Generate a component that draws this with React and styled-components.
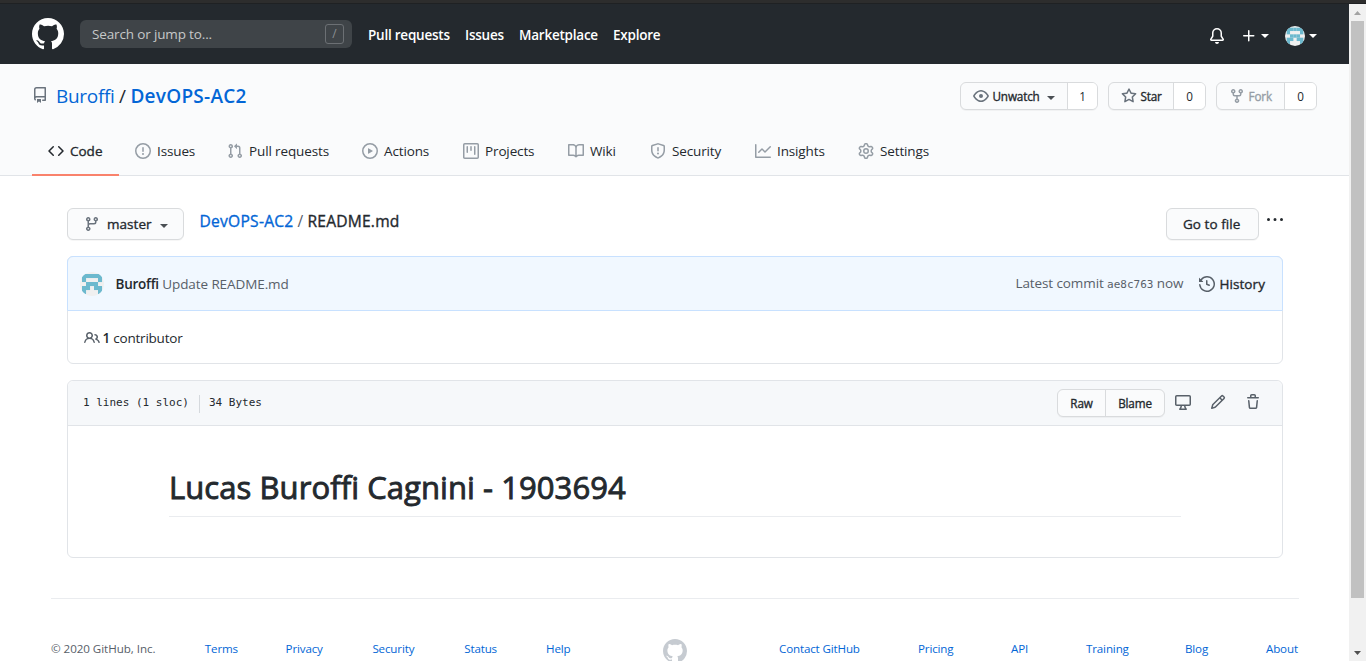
import React from "react";
import styled, { createGlobalStyle, css } from "styled-components";

const GlobalStyle = createGlobalStyle`
  *, *::before, *::after { box-sizing: border-box; }
  body {
    margin: 0;
    background: #fff;
    color: #24292e;
    font-family: "Open Sans", "Noto Sans", sans-serif;
    font-size: 13.5px;
    line-height: 20px;
    letter-spacing: -0.15px;
    overflow: hidden;
  }
  a { color: inherit; text-decoration: none; }
  h1, p { margin: 0; }
  svg { display: block; flex: none; fill: currentColor; }
`;

const paths = {
  github: "M8 0C3.58 0 0 3.58 0 8c0 3.54 2.29 6.53 5.47 7.59.4.07.55-.17.55-.38 0-.19-.01-.82-.01-1.49-2.01.37-2.53-.49-2.69-.94-.09-.23-.48-.94-.82-1.13-.28-.15-.68-.52-.01-.53.63-.01 1.08.58 1.23.82.72 1.21 1.87.87 2.33.66.07-.52.28-.87.51-1.07-1.78-.2-3.64-.89-3.64-3.95 0-.87.31-1.59.82-2.15-.08-.2-.36-1.02.08-2.12 0 0 .67-.21 2.2.82.64-.18 1.32-.27 2-.27.68 0 1.36.09 2 .27 1.53-1.04 2.2-.82 2.2-.82.44 1.1.16 1.92.08 2.12.51.56.82 1.27.82 2.15 0 3.07-1.87 3.75-3.65 3.95.29.25.54.73.54 1.48 0 1.07-.01 1.93-.01 2.2 0 .21.15.46.55.38A8.013 8.013 0 0016 8c0-4.42-3.58-8-8-8z",
  repo: "M2 2.5A2.5 2.5 0 014.5 0h8.75a.75.75 0 01.75.75v12.5a.75.75 0 01-.75.75h-2.5a.75.75 0 110-1.5h1.75v-2h-8a1 1 0 00-.714 1.7.75.75 0 01-1.072 1.05A2.495 2.495 0 012 11.5v-9zm10.5-1V9h-8c-.356 0-.694.074-1 .208V2.5a1 1 0 011-1h8zM5 12.25v3.25a.25.25 0 00.4.2l1.45-1.087a.25.25 0 01.3 0L8.6 15.7a.25.25 0 00.4-.2v-3.25a.25.25 0 00-.25-.25h-3.5a.25.25 0 00-.25.25z",
  code: "M4.72 3.22a.75.75 0 011.06 1.06L2.06 8l3.72 3.72a.75.75 0 11-1.06 1.06L.47 8.53a.75.75 0 010-1.06l4.25-4.25zm6.56 0a.75.75 0 10-1.06 1.06L13.94 8l-3.72 3.72a.75.75 0 101.06 1.06l4.25-4.25a.75.75 0 000-1.06l-4.25-4.25z",
  issue: "M8 1.5a6.5 6.5 0 100 13 6.5 6.5 0 000-13zM0 8a8 8 0 1116 0A8 8 0 010 8zm9 3a1 1 0 11-2 0 1 1 0 012 0zm-.25-6.25a.75.75 0 00-1.5 0v3.5a.75.75 0 001.5 0v-3.5z",
  pull: "M7.177 3.073L9.573.677A.25.25 0 0110 .854v4.792a.25.25 0 01-.427.177L7.177 3.427a.25.25 0 010-.354zM3.75 2.5a.75.75 0 100 1.5.75.75 0 000-1.5zm-2.25.75a2.25 2.25 0 113 2.122v5.256a2.251 2.251 0 11-1.5 0V5.372A2.25 2.25 0 011.5 3.25zM11 2.5h-1V4h1a1 1 0 011 1v5.628a2.251 2.251 0 101.5 0V5A2.5 2.5 0 0011 2.5zm1 10.25a.75.75 0 111.5 0 .75.75 0 01-1.5 0zM3.75 12a.75.75 0 100 1.5.75.75 0 000-1.5z",
  play: "M1.5 8a6.5 6.5 0 1113 0 6.5 6.5 0 01-13 0zM8 0a8 8 0 100 16A8 8 0 008 0zM6.379 5.227A.25.25 0 006 5.442v5.117a.25.25 0 00.379.214l4.264-2.559a.25.25 0 000-.428L6.379 5.227z",
  project: "M1.75 0A1.75 1.75 0 000 1.75v12.5C0 15.216.784 16 1.75 16h12.5A1.75 1.75 0 0016 14.25V1.75A1.75 1.75 0 0014.25 0H1.75zM1.5 1.75a.25.25 0 01.25-.25h12.5a.25.25 0 01.25.25v12.5a.25.25 0 01-.25.25H1.75a.25.25 0 01-.25-.25V1.75zM11.75 3a.75.75 0 00-.75.75v7.5a.75.75 0 001.5 0v-7.5a.75.75 0 00-.75-.75zm-8.25.75a.75.75 0 011.5 0v5.5a.75.75 0 01-1.5 0v-5.5zM8 3a.75.75 0 00-.75.75v3.5a.75.75 0 001.5 0v-3.5A.75.75 0 008 3z",
  book: "M0 1.75A.75.75 0 01.75 1h4.253c1.227 0 2.317.59 3 1.501A3.744 3.744 0 0111.006 1h4.245a.75.75 0 01.75.75v10.5a.75.75 0 01-.75.75h-4.507a2.25 2.25 0 00-1.591.659l-.622.621a.75.75 0 01-1.06 0l-.622-.621A2.25 2.25 0 005.258 13H.75a.75.75 0 01-.75-.75V1.75zm8.755 3a2.25 2.25 0 012.25-2.25H14.5v9h-3.757c-.71 0-1.4.201-1.992.572l.004-7.322zm-1.504 7.324l.004-5.073-.002-2.253A2.25 2.25 0 005.003 2.5H1.5v9h3.757a3.75 3.75 0 011.994.574z",
  shield: "M7.467.133a1.75 1.75 0 011.066 0l5.25 1.68A1.75 1.75 0 0115 3.48V7c0 1.566-.32 3.182-1.303 4.682-.983 1.498-2.585 2.813-5.032 3.855a1.7 1.7 0 01-1.33 0c-2.447-1.042-4.049-2.357-5.032-3.855C1.32 10.182 1 8.566 1 7V3.48a1.75 1.75 0 011.217-1.667l5.25-1.68zm.61 1.429a.25.25 0 00-.153 0l-5.25 1.68a.25.25 0 00-.174.238V7c0 1.358.275 2.666 1.057 3.86.784 1.194 2.121 2.34 4.366 3.297a.2.2 0 00.154 0c2.245-.956 3.582-2.104 4.366-3.298C13.225 9.666 13.5 8.36 13.5 7V3.48a.25.25 0 00-.174-.237l-5.25-1.68zM9 10.5a1 1 0 11-2 0 1 1 0 012 0zm-.25-5.75a.75.75 0 10-1.5 0v3a.75.75 0 001.5 0v-3z",
  graph: "M1.5 1.75a.75.75 0 00-1.5 0v12.5c0 .414.336.75.75.75h14.5a.75.75 0 000-1.5H1.5V1.75zm14.28 2.53a.75.75 0 00-1.06-1.06L10 7.94 7.53 5.47a.75.75 0 00-1.06 0L3.22 8.72a.75.75 0 001.06 1.06L7 7.06l2.47 2.47a.75.75 0 001.06 0l5.25-5.25z",
  gear: "M7.429 1.525a6.593 6.593 0 011.142 0c.036.003.108.036.137.146l.289 1.105c.147.56.55.967.997 1.189.174.086.341.183.501.29.417.278.97.423 1.53.27l1.102-.303c.11-.03.175.016.195.046.219.31.41.641.573.989.014.031.022.11-.059.19l-.815.806c-.411.406-.562.957-.53 1.456a4.588 4.588 0 010 .582c-.032.499.119 1.05.53 1.456l.815.806c.08.08.073.159.059.19a6.494 6.494 0 01-.573.99c-.02.029-.086.074-.195.045l-1.103-.303c-.559-.153-1.112-.008-1.529.27-.16.107-.327.204-.5.29-.449.222-.851.628-.998 1.189l-.289 1.105c-.029.11-.101.143-.137.146a6.613 6.613 0 01-1.142 0c-.036-.003-.108-.037-.137-.146l-.289-1.105c-.147-.56-.55-.967-.997-1.189a4.502 4.502 0 01-.501-.29c-.417-.278-.97-.423-1.53-.27l-1.102.303c-.11.03-.175-.016-.195-.046a6.492 6.492 0 01-.573-.989c-.014-.031-.022-.11.059-.19l.815-.806c.411-.406.562-.957.53-1.456a4.587 4.587 0 010-.582c.032-.499-.119-1.05-.53-1.456l-.815-.806c-.08-.08-.073-.159-.059-.19a6.44 6.44 0 01.573-.99c.02-.029.086-.075.195-.045l1.103.303c.559.153 1.112.008 1.529-.27.16-.107.327-.204.5-.29.449-.222.851-.628.998-1.189l.289-1.105c.029-.11.101-.143.137-.146zM8 0c-.236 0-.47.01-.701.03-.743.065-1.29.615-1.458 1.261l-.29 1.106c-.017.066-.078.158-.211.224a5.994 5.994 0 00-.668.386c-.123.082-.233.09-.3.071L3.27 2.776c-.644-.177-1.392.02-1.82.63a7.977 7.977 0 00-.704 1.217c-.315.675-.111 1.422.363 1.891l.815.806c.05.048.098.147.088.294a6.084 6.084 0 000 .772c.01.147-.038.246-.088.294l-.815.806c-.474.469-.678 1.216-.363 1.891.2.428.436.835.704 1.218.428.609 1.176.806 1.82.63l1.103-.303c.066-.019.176-.011.299.071.213.143.436.272.668.386.133.066.194.158.212.224l.289 1.106c.169.646.715 1.196 1.458 1.26a8.094 8.094 0 001.402 0c.743-.064 1.29-.614 1.458-1.26l.29-1.106c.017-.066.078-.158.211-.224a5.98 5.98 0 00.668-.386c.123-.082.233-.09.3-.071l1.102.302c.644.177 1.392-.02 1.82-.63.268-.382.505-.789.704-1.217.315-.675.111-1.422-.364-1.891l-.814-.806c-.05-.048-.098-.147-.088-.294a6.1 6.1 0 000-.772c-.01-.147.039-.246.088-.294l.814-.806c.475-.469.679-1.216.364-1.891a7.992 7.992 0 00-.704-1.218c-.428-.609-1.176-.806-1.82-.63l-1.103.303c-.066.019-.176.011-.299-.071a5.991 5.991 0 00-.668-.386c-.133-.066-.194-.158-.212-.224L10.16 1.29C9.99.645 9.444.095 8.701.031A8.094 8.094 0 008 0zm1.5 8a1.5 1.5 0 11-3 0 1.5 1.5 0 013 0zM11 8a3 3 0 11-6 0 3 3 0 016 0z",
  eye: "M1.679 7.932c.412-.621 1.242-1.75 2.366-2.717C5.175 4.242 6.527 3.5 8 3.5c1.473 0 2.824.742 3.955 1.715 1.124.967 1.954 2.096 2.366 2.717a.119.119 0 010 .136c-.412.621-1.242 1.75-2.366 2.717C10.825 11.758 9.473 12.5 8 12.5c-1.473 0-2.824-.742-3.955-1.715C2.92 9.818 2.09 8.69 1.679 8.068a.119.119 0 010-.136zM8 2c-1.981 0-3.67.992-4.933 2.078C1.797 5.169.88 6.423.43 7.1a1.619 1.619 0 000 1.798c.45.678 1.367 1.932 2.637 3.024C4.329 13.008 6.019 14 8 14c1.981 0 3.67-.992 4.933-2.078 1.27-1.091 2.187-2.345 2.637-3.023a1.619 1.619 0 000-1.798c-.45-.678-1.367-1.932-2.637-3.023C11.671 2.992 9.981 2 8 2zm0 8a2 2 0 100-4 2 2 0 000 4z",
  star: "M8 .25a.75.75 0 01.673.418l1.882 3.815 4.21.612a.75.75 0 01.416 1.279l-3.046 2.97.719 4.192a.75.75 0 01-1.088.791L8 12.347l-3.766 1.98a.75.75 0 01-1.088-.79l.72-4.194L.818 6.374a.75.75 0 01.416-1.28l4.21-.611L7.327.668A.75.75 0 018 .25zm0 2.445L6.615 5.5a.75.75 0 01-.564.41l-3.097.45 2.24 2.184a.75.75 0 01.216.664l-.528 3.084 2.769-1.456a.75.75 0 01.698 0l2.77 1.456-.53-3.084a.75.75 0 01.216-.664l2.24-2.183-3.096-.45a.75.75 0 01-.564-.41L8 2.694v.001z",
  fork: "M5 3.25a.75.75 0 11-1.5 0 .75.75 0 011.5 0zm0 2.122a2.25 2.25 0 10-1.5 0v.878A2.25 2.25 0 005.75 8.5h1.5v2.128a2.251 2.251 0 101.5 0V8.5h1.5a2.25 2.25 0 002.25-2.25v-.878a2.25 2.25 0 10-1.5 0v.878a.75.75 0 01-.75.75h-4.5A.75.75 0 015 6.25v-.878zm3.75 7.378a.75.75 0 11-1.5 0 .75.75 0 011.5 0zm3-8.75a.75.75 0 100-1.5.75.75 0 000 1.5z",
  branch: "M11.75 2.5a.75.75 0 100 1.5.75.75 0 000-1.5zm-2.25.75a2.25 2.25 0 113 2.122V6A2.5 2.5 0 0110 8.5H6a1 1 0 00-1 1v1.128a2.251 2.251 0 11-1.5 0V5.372a2.25 2.25 0 111.5 0v1.836A2.492 2.492 0 016 7h4a1 1 0 001-1v-.628A2.25 2.25 0 019.5 3.25zM4.25 12a.75.75 0 100 1.5.75.75 0 000-1.5zM3.5 3.25a.75.75 0 111.5 0 .75.75 0 01-1.5 0z",
  people: "M5.5 3.5a2 2 0 100 4 2 2 0 000-4zM2 5.5a3.5 3.5 0 115.898 2.549 5.507 5.507 0 013.034 4.084.75.75 0 11-1.482.235 4.001 4.001 0 00-7.9 0 .75.75 0 01-1.482-.236A5.507 5.507 0 013.102 8.05 3.49 3.49 0 012 5.5zM11 4a.75.75 0 100 1.5 1.5 1.5 0 01.666 2.844.75.75 0 00-.416.672v.352a.75.75 0 00.574.73c1.2.289 2.162 1.2 2.522 2.372a.75.75 0 101.434-.44 5.01 5.01 0 00-2.56-3.012A3 3 0 0011 4z",
  history: "M1.643 3.143L.427 1.927A.25.25 0 000 2.104V5.75c0 .138.112.25.25.25h3.646a.25.25 0 00.177-.427L2.715 4.215a6.5 6.5 0 11-1.18 4.458.75.75 0 10-1.493.154 8.001 8.001 0 101.6-5.684zM7.75 4a.75.75 0 01.75.75v2.992l2.028.812a.75.75 0 01-.557 1.392l-2.5-1A.75.75 0 017 8.25v-3.5A.75.75 0 017.75 4z",
  desktop: "M1.75 2.5h12.5a.25.25 0 01.25.25v7.5a.25.25 0 01-.25.25H1.75a.25.25 0 01-.25-.25v-7.5a.25.25 0 01.25-.25zM14.25 1H1.75A1.75 1.75 0 000 2.75v7.5C0 11.216.784 12 1.75 12h3.727c-.1 1.041-.52 1.872-1.292 2.757A.75.75 0 004.75 16h6.5a.75.75 0 00.565-1.243c-.772-.885-1.193-1.716-1.292-2.757h3.727A1.75 1.75 0 0016 10.25v-7.5A1.75 1.75 0 0014.25 1zM9.018 12H6.982a5.72 5.72 0 01-.765 2.5h3.566a5.72 5.72 0 01-.765-2.5z",
  pencil: "M11.013 1.427a1.75 1.75 0 012.474 0l1.086 1.086a1.75 1.75 0 010 2.474l-8.61 8.61c-.21.21-.47.364-.756.445l-3.251.93a.75.75 0 01-.927-.928l.929-3.25a1.75 1.75 0 01.445-.758l8.61-8.61zm1.414 1.06a.25.25 0 00-.354 0L10.811 3.75l1.439 1.44 1.263-1.263a.25.25 0 000-.354l-1.086-1.086zM11.189 6.25L9.75 4.81l-6.286 6.287a.25.25 0 00-.064.108l-.558 1.953 1.953-.558a.249.249 0 00.108-.064l6.286-6.286z",
  trash: "M6.5 1.75a.25.25 0 01.25-.25h2.5a.25.25 0 01.25.25V3h-3V1.75zm4.5 0V3h2.25a.75.75 0 010 1.5H2.75a.75.75 0 010-1.5H5V1.75C5 .784 5.784 0 6.75 0h2.5C10.216 0 11 .784 11 1.75zM4.496 6.675a.75.75 0 10-1.492.15l.66 6.6A1.75 1.75 0 005.405 15h5.19c.9 0 1.652-.681 1.741-1.576l.66-6.6a.75.75 0 00-1.492-.149l-.66 6.6a.25.25 0 01-.249.225h-5.19a.25.25 0 01-.249-.225l-.66-6.6z",
  kebab: "M8 9a1.5 1.5 0 100-3 1.5 1.5 0 000 3zM1.5 9a1.5 1.5 0 100-3 1.5 1.5 0 000 3zm13 0a1.5 1.5 0 100-3 1.5 1.5 0 000 3z",
  bell: "M8 16a2 2 0 001.985-1.75c.017-.137-.097-.25-.235-.25h-3.5c-.138 0-.252.113-.235.25A2 2 0 008 16zM8 1.5A3.5 3.5 0 004.5 5v2.947c0 .346-.102.683-.294.97l-1.703 2.556a.018.018 0 00-.003.01l.001.006c0 .002.002.004.004.006a.017.017 0 00.006.004l.007.001h10.964l.007-.001a.016.016 0 00.006-.004.016.016 0 00.004-.006l.001-.007a.017.017 0 00-.003-.01l-1.703-2.554a1.75 1.75 0 01-.294-.97V5A3.5 3.5 0 008 1.5zM3 5a5 5 0 0110 0v2.947c0 .05.015.098.042.139l1.703 2.555A1.518 1.518 0 0113.482 13H2.518a1.518 1.518 0 01-1.263-2.36l1.703-2.554A.25.25 0 003 7.947V5z",
  plus: "M7.75 2a.75.75 0 01.75.75V7h4.25a.75.75 0 110 1.5H8.5v4.25a.75.75 0 11-1.5 0V8.5H2.75a.75.75 0 010-1.5H7V2.75A.75.75 0 017.75 2z",
};

const Icon = ({ name, size = 16 }) => (
  <svg viewBox="0 0 16 16" width={size} height={size} aria-hidden="true">
    <path fillRule="evenodd" d={paths[name]} />
  </svg>
);

const identicon = ["11111", "10001", "01110", "11011", "10001"];
const AvatarSvg = styled.svg`
  border-radius: 50%;
  background: #f0f0f0;
`;
const Avatar = ({ size }) => (
  <AvatarSvg viewBox="0 0 12 12" width={size} height={size} aria-hidden="true">
    {identicon.flatMap((row, y) =>
      [...row].map((c, x) =>
        c === "1" ? <rect key={`${x}${y}`} x={1 + x * 2} y={1 + y * 2} width="2.02" height="2.02" fill="#6cb9ce" /> : null
      )
    )}
  </AvatarSvg>
);

const Window = styled.div`
  display: flex;
  flex-direction: column;
  width: 1366px;
  height: 661px;
  overflow: hidden;
`;
const TopEdge = styled.div`
  flex: none;
  height: 4px;
  background: #2d2d2d;
  border-bottom: 1px solid #1f2123;
`;
const Viewport = styled.div`
  display: grid;
  grid-template-columns: 1349px 17px;
  flex: 1;
  min-height: 0;
`;
const Page = styled.div`
  overflow: hidden;
`;

const ScrollTrack = styled.div`
  display: flex;
  flex-direction: column;
  background: #f1f1f1;
`;
const ScrollArrow = styled.div`
  display: flex;
  align-items: center;
  justify-content: center;
  height: 17px;
  color: ${(p) => p.$color};
`;
const ScrollThumb = styled.div`
  height: 577px;
  margin: 0 2px;
  background: #c1c1c1;
`;
const ScrollGap = styled.div`
  flex: 1;
`;

const Text = styled.span`
  white-space: pre;
  ${(p) => p.$ls !== undefined && css`letter-spacing: ${p.$ls}px;`}
  ${(p) => p.$medium && css`-webkit-text-stroke: 0.35px currentColor;`}
  ${(p) => p.$bold && css`font-weight: 600;`}
`;
const Caret = styled.span`
  width: 0;
  height: 0;
  border: 4px solid transparent;
  border-top-color: currentColor;
  border-bottom: 0;
`;

const Header = styled.header`
  display: flex;
  align-items: center;
  height: 60px;
  padding: 0 32px;
  background: #24292e;
  color: #fff;
`;
const Search = styled.div`
  display: flex;
  align-items: center;
  justify-content: space-between;
  width: 272px;
  height: 28px;
  margin: 0 16px;
  padding: 0 8px 0 12px;
  border-radius: 6px;
  background: #3f4448;
  color: #c6c8c9;
`;
const SlashKey = styled.span`
  display: flex;
  align-items: center;
  justify-content: center;
  width: 19px;
  height: 20px;
  border: 1px solid #6c7074;
  border-radius: 3px;
  color: #8b8f93;
  font-size: 12px;
`;
const MainNav = styled.nav`
  display: flex;
  flex: 1;
  padding-top: 2px;
  letter-spacing: -0.23px;
`;
const MainLink = styled.a`
  width: ${(p) => p.$w}px;
`;
const HeaderTools = styled.div`
  display: flex;
  align-items: center;
  padding-top: 3px;
`;
const Tool = styled.span`
  display: flex;
  align-items: center;
  gap: ${(p) => p.$gap || 0}px;
  margin-left: ${(p) => p.$ml || 0}px;
`;

const RepoHead = styled.div`
  display: flex;
  flex-direction: column;
  justify-content: space-between;
  height: 112px;
  padding: 18px 32px 0;
  background: #fafbfc;
  border-bottom: 1px solid #e1e4e8;
`;
const RepoTitleRow = styled.div`
  display: flex;
  justify-content: space-between;
`;
const RepoTitle = styled.div`
  display: flex;
  align-items: center;
  height: 28px;
  color: #0366d6;
  font-size: 19px;
`;
const RepoIcon = styled.span`
  margin: 0 8px 3px 0;
  color: #6a737d;
`;
const Slash = styled.span`
  margin: 0 ${(p) => p.$m}px;
  color: ${(p) => p.$color || "#24292e"};
`;
const Actions = styled.div`
  display: flex;
  gap: 10px;
`;
const SplitButton = styled.div`
  display: flex;
  height: 28px;
  border: 1px solid #d9dbdd;
  border-radius: 6px;
  overflow: hidden;
  background: #fafbfc;
  font-size: 11.7px;
  box-shadow: 0 1px 0 rgba(27, 31, 35, 0.04);
`;
const Segment = styled.span`
  display: flex;
  align-items: center;
  justify-content: ${(p) => (p.$start ? "flex-start" : "center")};
  width: ${(p) => p.$w}px;
  padding-left: ${(p) => (p.$start ? 12 : 0)}px;
  gap: 3.5px;
  color: ${(p) => (p.$disabled ? "#959da5" : "#24292e")};
  background: ${(p) => (p.$count ? "#fff" : "transparent")};
  & + & { border-left: 1px solid #d9dbdd; }
  svg { color: ${(p) => (p.$disabled ? "#959da5" : "#6a737d")}; }
`;
const SmallCaret = styled(Caret)`
  margin-top: 3px;
  margin-left: ${(p) => p.$ml}px;
  color: #4a4f54;
`;

const Tabs = styled.nav`
  display: flex;
  height: 49px;
  margin-bottom: -1px;
`;
const Tab = styled.a`
  display: flex;
  align-items: center;
  gap: 6px;
  width: ${(p) => p.$w}px;
  padding: 0 0 0 16px;
  border-bottom: 2px solid ${(p) => (p.$active ? "#f9826c" : "transparent")};
  letter-spacing: ${(p) => (p.$active ? 0 : -0.13)}px;
  svg { color: ${(p) => (p.$active ? "#24292e" : "#959da5")}; }
`;

const Container = styled.main`
  padding: 32px 66px 0 67px;
`;
const FileNav = styled.div`
  display: flex;
  height: 32px;
  margin-bottom: 16px;
`;
const Button = styled.button`
  display: flex;
  align-items: center;
  width: ${(p) => p.$w}px;
  height: 32px;
  padding: 0 0 0 16px;
  border: 1px solid #d9dbdd;
  border-radius: 6px;
  background: #fafbfc;
  box-shadow: 0 1px 0 rgba(27, 31, 35, 0.04);
  color: #24292e;
  font: inherit;
  letter-spacing: 0.05px;
  svg { margin-right: 7px; color: #6a737d; }
`;
const Crumbs = styled.div`
  flex: 1;
  margin-left: 15.5px;
  font-size: 15.6px;
  line-height: 26px;
  letter-spacing: 0.25px;
  a { color: #0366d6; }
`;
const Kebab = styled.span`
  margin: 4px 0 0 8px;
`;

const Box = styled.section`
  margin-bottom: 16px;
  border: 1px solid #e1e4e8;
  border-radius: 6px;
`;
const CommitHeader = styled.div`
  display: flex;
  align-items: center;
  height: 55px;
  margin: -1px -1px 0;
  padding: 0 17px 0 12px;
  border: 1px solid #c8e1ff;
  border-radius: 6px 6px 0 0;
  background: #f1f8ff;
  color: #586069;
`;
const CommitMessage = styled.div`
  flex: 1;
  margin-left: 11.5px;
  letter-spacing: -0.09px;
  strong { color: #24292e; font-weight: 600; letter-spacing: -0.25px; }
`;
const Mono = styled.span`
  font-family: "DejaVu Sans Mono", monospace;
  font-size: 11px;
  letter-spacing: 0;
  white-space: pre;
`;
const CommitMeta = styled.span`
  padding-top: 1px;
  letter-spacing: -0.1px;
`;
const History = styled.a`
  display: flex;
  align-items: center;
  gap: 4px;
  margin-left: 16px;
  svg { color: #586069; }
  span { color: #24292e; }
`;
const Contributors = styled.div`
  display: flex;
  align-items: center;
  gap: 2.5px;
  height: 52px;
  padding: 1px 16px 0;
  letter-spacing: -0.22px;
  svg { color: #586069; }
`;
const FileHeader = styled.div`
  display: flex;
  align-items: center;
  height: 45px;
  padding: 0 21px 0 15px;
  border-bottom: 1px solid #e1e4e8;
  border-radius: 6px 6px 0 0;
  background: #f6f8fa;
`;
const FileInfo = styled.div`
  display: flex;
  flex: 1;
  align-items: center;
  padding-bottom: 1px;
`;
const Divider = styled.span`
  width: 1px;
  height: 18px;
  margin: 3px 9px 0 10px;
  background: #d5d9dd;
`;
const FileTools = styled.div`
  display: flex;
  align-items: center;
  color: #586069;
`;
const FileTool = styled.span`
  margin: 0 0 3px ${(p) => p.$ml}px;
`;
const Article = styled.article`
  height: 131px;
  padding: 38px 101px 0;
`;
const Heading = styled.h1`
  height: 53px;
  border-bottom: 1px solid #eaecef;
  font-size: 31px;
  font-weight: 400;
  line-height: 46px;
  letter-spacing: 0.07px;
  -webkit-text-stroke: 0.9px currentColor;
`;

const Footer = styled.footer`
  display: flex;
  justify-content: space-between;
  margin: 40px 50px 0 51px;
  padding-top: 40px;
  border-top: 1px solid #eaecef;
  font-size: 11.6px;
  color: #0366d6;
`;
const FooterGroup = styled.div`
  display: flex;
  justify-content: space-between;
  width: ${(p) => p.$w}px;
`;
const FooterItem = styled.a`
  display: flex;
  width: ${(p) => p.$w}px;
  color: ${(p) => (p.$muted ? "#586069" : "inherit")};
`;
const FooterMark = styled.span`
  color: #c6cbd1;
`;

const mainLinks = [["Pull requests", 97], ["Issues", 54], ["Marketplace", 94], ["Explore", 60]];
const tabs = [
  ["code", "Code", 87],
  ["issue", "Issues", 92],
  ["pull", "Pull requests", 135],
  ["play", "Actions", 101],
  ["project", "Projects", 105],
  ["book", "Wiki", 82],
  ["shield", "Security", 105],
  ["graph", "Insights", 103],
  ["gear", "Settings", 105],
];
const footerLeft = [["© 2020 GitHub, Inc.", 104], ["Terms", 31], ["Privacy", 37], ["Security", 42], ["Status", 32], ["Help", 25]];
const footerRight = [["Contact GitHub", 82], ["Pricing", 36], ["API", 18], ["Training", 42], ["Blog", 24], ["About", 33]];

export default function App() {
  return (
    <Window>
      <GlobalStyle />
      <TopEdge />
      <Viewport>
        <Page>
          <Header>
            <Icon name="github" size={32} />
            <Search>
              <Text>Search or jump to...</Text>
              <SlashKey>/</SlashKey>
            </Search>
            <MainNav>
              {mainLinks.map(([label, w]) => (
                <MainLink key={label} $w={w} href="#"><Text $bold>{label}</Text></MainLink>
              ))}
            </MainNav>
            <HeaderTools>
              <Icon name="bell" />
              <Tool $ml={16} $gap={4}><Icon name="plus" /><Caret /></Tool>
              <Tool $ml={16} $gap={4}><Avatar size={20} /><Caret /></Tool>
            </HeaderTools>
          </Header>

          <RepoHead>
            <RepoTitleRow>
              <RepoTitle>
                <RepoIcon><Icon name="repo" /></RepoIcon>
                <Text $ls={-0.3}>Buroffi</Text>
                <Slash $m={4.5}>/</Slash>
                <Text $bold $ls={0.25}>DevOPS-AC2</Text>
              </RepoTitle>
              <Actions>
                <SplitButton>
                  <Segment $w={106} $start><Icon name="eye" /><Text $medium>Unwatch</Text><SmallCaret $ml={3.5} /></Segment>
                  <Segment $w={30} $count>1</Segment>
                </SplitButton>
                <SplitButton>
                  <Segment $w={64} $start><Icon name="star" /><Text $medium>Star</Text></Segment>
                  <Segment $w={32} $count>0</Segment>
                </SplitButton>
                <SplitButton>
                  <Segment $w={67} $start $disabled><Icon name="fork" /><Text $medium>Fork</Text></Segment>
                  <Segment $w={32} $count>0</Segment>
                </SplitButton>
              </Actions>
            </RepoTitleRow>
            <Tabs>
              {tabs.map(([icon, label, w], i) => (
                <Tab key={label} href="#" $w={w} $active={i === 0}>
                  <Icon name={icon} />
                  <Text $medium={i === 0}>{label}</Text>
                </Tab>
              ))}
            </Tabs>
          </RepoHead>

          <Container>
            <FileNav>
              <Button $w={117}><Icon name="branch" /><Text $medium>master</Text><SmallCaret $ml={8} /></Button>
              <Crumbs>
                <a href="#"><Text $medium>DevOPS-AC2</Text></a>
                <Slash $m={4} $color="#586069">/</Slash>
                <Text $medium $ls={0.2}>README.md</Text>
              </Crumbs>
              <Button $w={93}><Text $medium>Go to file</Text></Button>
              <Kebab><Icon name="kebab" /></Kebab>
            </FileNav>

            <Box>
              <CommitHeader>
                <Avatar size={24} />
                <CommitMessage><strong>Buroffi</strong> Update README.md</CommitMessage>
                <CommitMeta><Text>Latest commit </Text><Mono>ae8c763</Mono><Text> now</Text></CommitMeta>
                <History href="#"><Icon name="history" /><Text $medium $ls={0.08}>History</Text></History>
              </CommitHeader>
              <Contributors>
                <Icon name="people" />
                <span><Text $bold>1</Text><Text> contributor</Text></span>
              </Contributors>
            </Box>

            <Box>
              <FileHeader>
                <FileInfo>
                  <Mono>1 lines (1 sloc)</Mono>
                  <Divider />
                  <Mono>34 Bytes</Mono>
                </FileInfo>
                <FileTools>
                  <SplitButton>
                    <Segment $w={47}><Text $medium>Raw</Text></Segment>
                    <Segment $w={59}><Text $medium>Blame</Text></Segment>
                  </SplitButton>
                  <FileTool $ml={10}><Icon name="desktop" /></FileTool>
                  <FileTool $ml={19}><Icon name="pencil" /></FileTool>
                  <FileTool $ml={19}><Icon name="trash" /></FileTool>
                </FileTools>
              </FileHeader>
              <Article>
                <Heading><Text>Lucas Buroffi Cagnini - 1903694</Text></Heading>
              </Article>
            </Box>
          </Container>

          <Footer>
            <FooterGroup $w={520}>
              {footerLeft.map(([label, w], i) => (
                <FooterItem key={label} $w={w} $muted={i === 0}><Text $ls={i === 0 ? -0.05 : undefined}>{label}</Text></FooterItem>
              ))}
            </FooterGroup>
            <FooterMark><Icon name="github" size={24} /></FooterMark>
            <FooterGroup $w={520}>
              {footerRight.map(([label, w]) => (
                <FooterItem key={label} $w={w} href="#"><Text>{label}</Text></FooterItem>
              ))}
            </FooterGroup>
          </Footer>
        </Page>
        <ScrollTrack>
          <ScrollArrow $color="#a3a3a3"><svg width="7" height="4" viewBox="0 0 7 4"><path d="M0 4L3.5 0 7 4z" /></svg></ScrollArrow>
          <ScrollThumb />
          <ScrollGap />
          <ScrollArrow $color="#505050"><svg width="7" height="4" viewBox="0 0 7 4"><path d="M0 0L3.5 4 7 0z" /></svg></ScrollArrow>
        </ScrollTrack>
      </Viewport>
    </Window>
  );
}
